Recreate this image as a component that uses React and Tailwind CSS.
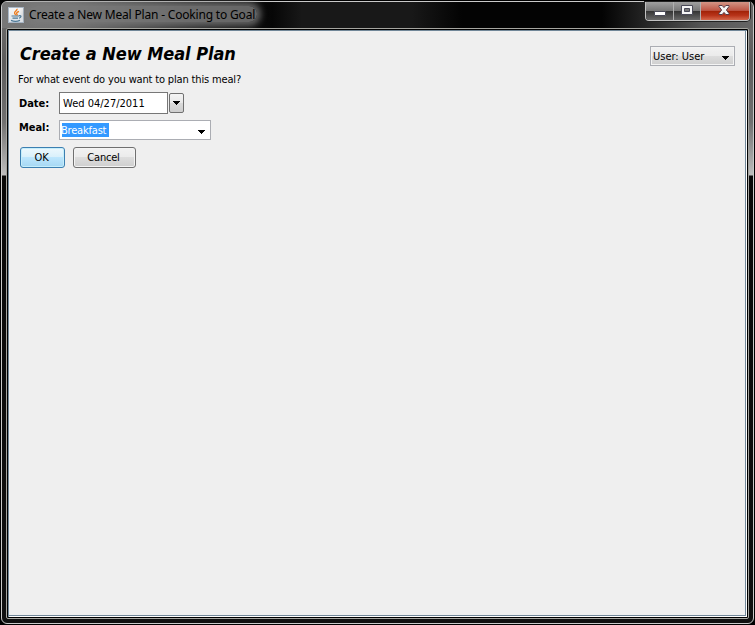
import React from "react";

const tahoma = "font-['DejaVu_Sans_Condensed','DejaVu_Sans',sans-serif] [font-stretch:condensed]";

function JavaIcon() {
  return (
    <svg className="mt-[6px] ml-[6px] h-4 w-4 shrink-0" viewBox="0 0 16 16">
      <defs>
        <linearGradient id="jv" x2="0" y2="1">
          <stop stopColor="#f6f6f6" />
          <stop offset="1" stopColor="#dde2e8" />
        </linearGradient>
      </defs>
      <rect x=".5" y=".5" width="15" height="15" fill="url(#jv)" stroke="#a9b7c6" />
      <path d="M9 1.800c.8 1.800-3.200 2.800-2.400 4.600l1.200 1.800M11 4.300C8.500 5.300 8 6.400 9 7.200c.5.600 0 1-.5 1.400" fill="none" stroke="#ee7d20" strokeWidth="1.3" />
      <path d="M3.500 9h7.500M4.500 11.200h5.500M3 13.400c2.500 1 6.500 1 9 0M11 8.800c2.800-.6 2.500 1.800 0 2.400" fill="none" stroke="#4c7896" strokeWidth="1.2" />
    </svg>
  );
}

function WindowButtons() {
  return (
    <div className="mr-[3px] flex h-[19px] w-[105px] shrink-0 overflow-hidden rounded-b-[4px] border border-t-0 border-[#c2c2c2] shadow-[0_0_0_1px_#222]">
      <div className="flex w-[28px] justify-center border-r border-[#b0b0b0] bg-[linear-gradient(#a0a0a0,#777_48%,#333_50%,#686868)] pt-[9px]">
        <div className="h-[5px] w-[12px] rounded-[1px] border border-[#4a4a58] bg-white" />
      </div>
      <div className="flex w-[27px] justify-center border-r border-[#b0b0b0] bg-[linear-gradient(#a0a0a0,#777_48%,#333_50%,#686868)] pt-[3px]">
        <svg width="12" height="10" viewBox="0 0 12 10">
          <path fillRule="evenodd" d="M.5.5h11v9H.5zM3.500 3.500v3h5v-3z" fill="#f5f5f5" stroke="#4a4a58" />
        </svg>
      </div>
      <div className="flex flex-1 justify-center bg-[linear-gradient(#d39586,#bd5645_47%,#a12106_50%,#b8341a_75%,#d4684c)] pt-[3px] pr-[2px]">
        <svg width="12" height="10" viewBox="0 0 12 10">
          <path d="M1 .5h3.200L6 2.600 7.800.5H11v1L8.400 5 11 8.500v1H7.800L6 7.400 4.200 9.500H1v-1L3.600 5 1 1.500z" fill="#f7f7f7" stroke="#573d49" />
        </svg>
      </div>
    </div>
  );
}

function Arrow({ className = "" }) {
  return (
    <svg className={"shrink-0 " + className} width="7" height="4" viewBox="0 0 7 4" shapeRendering="crispEdges">
      <path d="M0 0h7v1H6v1H5v1H4v1H3V3H2V2H1V1H0z" />
    </svg>
  );
}

export default function App() {
  return (
    <div className="h-[625px] w-[755px] bg-black p-px">
      <div className="flex h-[623px] w-[753px] flex-col rounded-[6px] border border-[#c9c9c9] bg-[linear-gradient(#707070_0px,#5c5c5c_60px,#707070_120px,#bdbdbd_173px,#080808_174px,#101010)]">
        <div className="flex h-[26px] shrink-0 items-start rounded-t-[5px] bg-[linear-gradient(90deg,#777_0,#707070_70px,#555_120px,#262626_200px,#060606_270px,#181818_300px,#181818_410px,#030303_460px,#030303_600px,#222_640px,#555_700px,#666)]">
          <div className="-mt-px"><JavaIcon /></div>
          <div className="mt-[4px] ml-[5px] h-[18px] w-[228px]">
            <div className="h-[16px] rounded-full bg-[#7c7c7c]/80 shadow-[0_0_6px_4px_rgba(124,124,124,0.75)]">
              <div className="font-['Noto_Sans','Open_Sans',sans-serif] text-[12px] leading-[17px] tracking-[-0.18px] whitespace-nowrap text-black">Create a New Meal Plan - Cooking to Goal</div>
            </div>
          </div>
          <div className="flex-1" />
          <WindowButtons />
        </div>
        <div className="mx-[4px] mb-[4px] min-h-0 flex-1 rounded-[2px] border border-[#a5a5a0] bg-black p-px">
          <div className="h-full border border-r-0 border-b-0 border-[#728899] bg-white pr-px pb-px">
            <div className={"flex h-full justify-between border-r border-b border-[#728899] bg-[#efefef] text-[11px] leading-[14px] text-black " + tahoma}>
              <div className="pt-[11px] pl-[9px]">
                <h1 className="ml-[2px] h-[24px] text-[18px] leading-[24px] font-bold tracking-[-0.05px] whitespace-nowrap italic">Create a New Meal Plan</h1>
                <p className="mt-[7px] tracking-[-0.16px] whitespace-nowrap">For what event do you want to plan this meal?</p>
                <div className="mt-[5px] flex items-center">
                  <div className="w-[41px] pt-[2px] pl-px font-bold tracking-[-0.05px]">Date:</div>
                  <div className="h-[22px] w-[109px] border border-[#777] bg-white pl-[3px] leading-[21px] tracking-[0px]">Wed 04/27/2011</div>
                  <div className="ml-px flex h-[20px] w-[15px] items-center justify-center rounded-[2px] border border-[#707070] bg-[linear-gradient(#f4f4f4,#e8e8e8_50%,#dadada_51%,#cecece)]"><Arrow /></div>
                </div>
                <div className="mt-[6px] flex">
                  <div className="w-[41px] pt-px pl-px font-bold tracking-[-0.05px]">Meal:</div>
                  <div className="flex h-[20px] w-[152px] items-start justify-between border border-[#abadb3] bg-white pt-[2px] pr-[5px] pl-[2px]">
                    <span className="h-[14px] w-[47px] bg-[#3399ff] leading-[16px] tracking-[-0.2px] text-white"><span className="-ml-px">Breakfast</span></span>
                    <Arrow className="mt-[7px]" />
                  </div>
                </div>
                <div className="mt-[7px] ml-[2px] flex gap-[8px] text-center leading-[18px] tracking-[-0.2px]">
                  <button className="h-[21px] w-[45px] rounded-[3px] border border-[#3c7fb1] bg-[linear-gradient(#edf8fd,#d9f0fb_48%,#bde6fd_50%,#a5d8f3)] pr-[2px] shadow-[inset_0_0_0_1px_#c5eefb]">OK</button>
                  <button className="h-[21px] w-[63px] rounded-[3px] border border-[#707070] bg-[linear-gradient(#f2f2f2,#ebebeb_48%,#dddddd_50%,#cfcfcf)] pr-[2px] shadow-[inset_0_0_0_1px_#f4f4f4]">Cancel</button>
                </div>
              </div>
              <div className="mt-[15px] mr-[10px] flex h-[20px] w-[85px] items-start justify-between border border-[#abadb3] bg-[linear-gradient(#f2f2f2,#ebebeb_48%,#dddddd_50%,#cfcfcf)] pt-[2px] pr-[5px] pl-[2px] shadow-[inset_0_0_0_1px_#f4f4f4]">
                <span className="pt-px tracking-[0px]">User: User</span>
                <Arrow className="mt-[7px]" />
              </div>
            </div>
          </div>
        </div>
      </div>
    </div>
  );
}
